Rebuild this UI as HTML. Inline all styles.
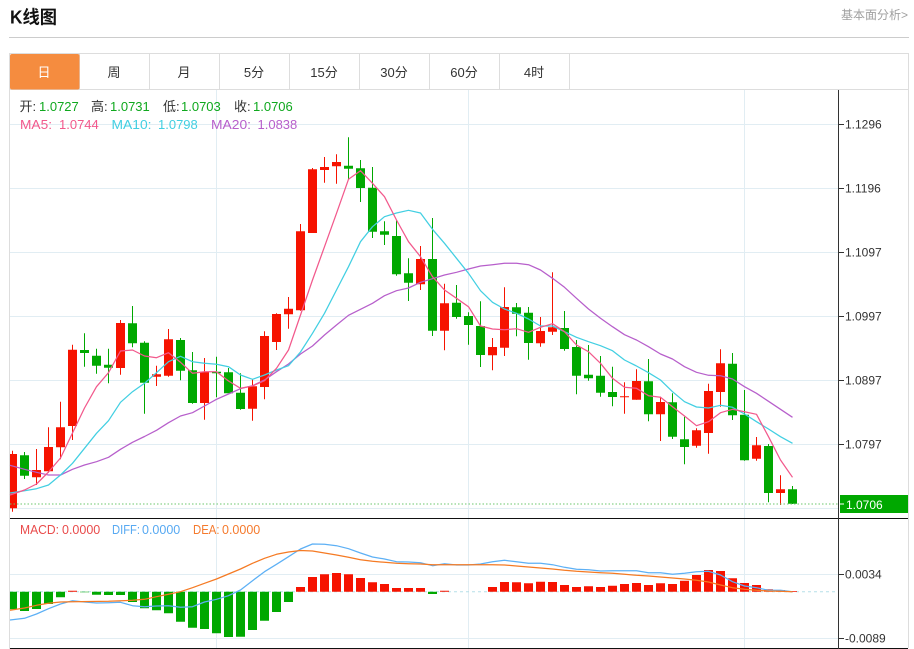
<!DOCTYPE html>
<html lang="zh">
<head>
<meta charset="utf-8">
<title>K线图</title>
<style>
html,body{margin:0;padding:0;background:#fff;width:914px;height:649px;overflow:hidden}
svg{display:block;position:absolute;left:0;top:0;font-family:"Liberation Sans","Noto Sans CJK SC",sans-serif}
text{white-space:pre}
</style>
</head>
<body>
<svg width="914" height="649" viewBox="0 0 914 649" xmlns="http://www.w3.org/2000/svg">
<rect width="914" height="649" fill="#fff"/>
<text x="10" y="23.5" font-size="18" font-weight="700" fill="#111" textLength="47" lengthAdjust="spacingAndGlyphs">K线图</text>
<text x="841" y="19" font-size="12" fill="#a0a0a0">基本面分析&gt;</text>
<path d="M9 37.5H909" stroke="#ccc" fill="none"/>

<!-- frame -->
<path d="M9.5 53.5H908.5V648M9.5 53V649M10 89.5H908.5M149.5 54V89M219.5 54V89M289.5 54V89M359.5 54V89M429.5 54V89M499.5 54V89M569.5 54V89M79.5 54V89" stroke="#ddd" fill="none"/>
<rect x="10" y="54" width="69.5" height="35.5" rx="2" fill="#f58c3f"/>
<g font-size="13" text-anchor="middle" fill="#333">
<text x="44" y="77" fill="#fff">日</text>
<text x="114" y="77">周</text>
<text x="184" y="77">月</text>
<text x="254" y="77">5分</text>
<text x="324" y="77">15分</text>
<text x="394" y="77">30分</text>
<text x="464" y="77">60分</text>
<text x="534" y="77">4时</text>
</g>

<!-- grid -->
<path d="M10 124.5H838M10 188.5H838M10 252.5H838M10 316.5H838M10 380.5H838M10 444.5H838M10 508.5H838M10 574.5H838M10 638.5H838M216.5 90V648M468.5 90V648M744.5 90V648" stroke="#e1edf3" fill="none"/>

<!-- candles -->
<path stroke="#f61300" fill="none" d="M12.5 450.7V511.7M36.5 449V485M48.5 427.3V472.7M60.5 401.7V459.3M72.5 344.7V440M120.5 320V374.7M156.5 365.7V386M168.5 329V376.7M204.5 358V419.7M252.5 379.3V420.7M264.5 331.3V399.3M276.5 313.3V350M288.5 297V328.7M300.5 224V310.7M312.5 168V233M324.5 157V182.7M336.5 154.3V183.7M420.5 246V290M444.5 283.7V350.3M492.5 338V370.3M504.5 287.3V356M540.5 317V346.7M552.5 272.3V335M624.5 382.3V413.7M636.5 369.3V399.7M660.5 396.7V441M696.5 428.3V447.7M708.5 383.7V453.7M720.5 349.3V406.7M756.5 437V460.7M780.5 475.3V505"/>
<path fill="#f61300" d="M10 454H17V508.3H10zM32 470h9V477.3H32zM44 447h9V471.3H44zM56 427.3h9V447.3H56zM68 349.7h9V426H68zM116 323h9V368H116zM152 374.3h9V376.7H152zM164 339.3h9V375.7H164zM200 371.7h9V403H200zM248 386.3h9V408.7H248zM260 336h9V387H260zM272 314h9V342H272zM284 308.7h9V314.3H284zM296 231.3h9V310.3H296zM308 169.3h9V233H308zM320 167h9V170H320zM332 162h9V166.3H332zM416 259h9V284.3H416zM440 303.3h9V330.7H440zM488 347h9V355.3H488zM500 307h9V347.7H500zM536 331h9V343.3H536zM548 327.3h9V331.7H548zM620 396.3h9V397.3H620zM632 381h9V399.7H632zM656 402h9V414.3H656zM692 430.3h9V445.7H692zM704 391h9V433H704zM716 363.3h9V392H716zM752 445.3h9V458.7H752zM776 489.3h9V493H776z"/>
<path stroke="#00a800" fill="none" d="M24.5 452V479M84.5 333.3V366.7M96.5 348.7V373.7M108.5 348.7V383.3M132.5 306V347.3M144.5 341.3V413.7M180.5 338V380.3M192.5 352V403.7M216.5 356.7V397.3M228.5 368V393M240.5 373.3V409.7M348.5 137.3V180M360.5 160V202M372.5 167V238M384.5 221.3V245M396.5 220V275.7M408.5 258.3V301M432.5 218V336M456.5 285V318.7M468.5 312.3V344.7M480.5 301.3V367M516.5 303V336.3M528.5 307V359.7M564.5 311V350.7M576.5 340V394.3M588.5 345V380.7M600.5 356V396.7M612.5 366.7V406.3M648.5 359V421.3M672.5 393.3V439M684.5 416.7V464.3M732.5 353V420M744.5 390V460.7M768.5 444V502.3M792.5 486V504"/>
<path fill="#00a800" d="M20 455.3h9V475.7H20zM80 350h9V353H80zM92 355.7h9V365.7H92zM104 364.7h9V367.7H104zM128 323.3h9V343.3H128zM140 342.7h9V382.7H140zM176 340h9V370.7H176zM188 370.3h9V403H188zM212 371.7h9V373.3H212zM224 372.3h9V393.3H224zM236 392.7h9V409H236zM344 165.7h9V168.7H344zM356 168.3h9V188H356zM368 187.7h9V231.7H368zM380 231.3h9V234.7H380zM392 236h9V274.3H392zM404 273.3h9V282.7H404zM428 259h9V330.7H428zM452 302.7h9V317H452zM464 316h9V325H464zM476 326h9V355H476zM512 307.3h9V313.7H512zM524 312.7h9V343H524zM560 328h9V349H560zM572 347h9V375.7H572zM584 374.7h9V378.3H584zM596 375.7h9V392.7H596zM608 392h9V397H608zM644 381.3h9V414.3H644zM668 402.3h9V436.7H668zM680 439.3h9V447H680zM728 363.7h9V415.3H728zM740 414.7h9V460.3H740zM764 446h9V493H764zM788 489.3h9V503.7H788z"/>

<!-- moving averages -->
<g fill="none" stroke-width="1.25" stroke-linejoin="round">
<polyline stroke="#b75fcb" points="10,465.3 24.5,469.3 36.5,472.3 48.5,475 60.5,475 72.5,469.3 84.5,465 96.5,461.7 108.5,457.3 120.5,449.3 132.5,442.3 144.5,436.5 156.5,430.3 168.5,422.7 180.5,416 192.5,412.7 204.5,406 216.5,399.3 228.5,394 240.5,388.7 252.5,385.7 264.5,380 276.5,371.7 288.5,364 300.5,354 312.5,346 324.5,335 336.5,325 348.5,315.3 360.5,309.3 372.5,303.3 384.5,295.7 396.5,290.7 408.5,288 420.5,282.3 432.5,278.7 444.5,275 456.5,272.3 468.5,269 480.5,266 492.5,264.7 504.5,263.3 516.5,263.3 528.5,264.7 540.5,270 552.5,278.3 564.5,287.3 576.5,298.3 588.5,309 600.5,318.3 612.5,326.7 624.5,334.7 636.5,340 648.5,346.7 660.5,354 672.5,359 684.5,366.7 696.5,372.3 708.5,375.3 720.5,375.7 732.5,379 744.5,386.7 756.5,393.3 768.5,401.3 780.5,409.3 792.5,417.3"/>
<polyline stroke="#42cfe2" points="10,493 24.5,490.7 36.5,488.7 48.5,485 60.5,475 72.5,463.3 84.5,448.3 96.5,433.3 108.5,420.7 120.5,402.3 132.5,391.7 144.5,383.3 156.5,372.7 168.5,361.7 180.5,356.3 192.5,361.7 204.5,363.3 216.5,364.3 228.5,366.7 240.5,375 252.5,379.3 264.5,375 276.5,370 288.5,365.7 300.5,352 312.5,333.3 324.5,313.3 336.5,290 348.5,266.7 360.5,241.7 372.5,226.7 384.5,216.7 396.5,213 408.5,210.3 420.5,213 432.5,229.3 444.5,243.3 456.5,258.3 468.5,273.3 480.5,290.7 492.5,302.3 504.5,309 516.5,313.3 528.5,319 540.5,326 552.5,326 564.5,331.7 576.5,337.3 588.5,341.7 600.5,345.7 612.5,350.7 624.5,360 636.5,366 648.5,372.7 660.5,380 672.5,391.7 684.5,401.7 696.5,407 708.5,408 720.5,405.3 732.5,407.3 744.5,414 756.5,421.7 768.5,429 780.5,436.7 792.5,443.3"/>
<polyline stroke="#f2598c" points="10,495 24.5,490 36.5,484 48.5,472 60.5,458 72.5,433 84.5,408 96.5,386.7 108.5,372.7 120.5,351 132.5,350 144.5,356 156.5,357.7 168.5,352.7 180.5,362.3 192.5,373.3 204.5,371.7 216.5,371.7 228.5,381 240.5,388.3 252.5,386 264.5,380.7 276.5,368.3 288.5,350 300.5,315 312.5,280 324.5,246.7 336.5,213.3 348.5,179.3 360.5,170.7 372.5,183.3 384.5,196.7 396.5,220 408.5,241.7 420.5,256.7 432.5,276.7 444.5,290 456.5,298.3 468.5,306.7 480.5,326 492.5,329 504.5,329.7 516.5,328.7 528.5,332.3 540.5,327.3 552.5,323.7 564.5,331.7 576.5,345 588.5,351.7 600.5,363.3 612.5,378.3 624.5,387.3 636.5,388.3 648.5,395.7 660.5,397.3 672.5,406.7 684.5,416 696.5,425.7 708.5,421.7 720.5,412.7 732.5,409.3 744.5,411.7 756.5,414.3 768.5,436.7 780.5,460 792.5,477.3"/>
</g>

<!-- last price dotted -->
<path d="M10 504H838" stroke="#6cc76c" stroke-width="1" stroke-dasharray="1.5 2" fill="none"/>

<!-- macd bars -->
<path d="M10 591.7H838" stroke="#b5dfe8" stroke-dasharray="3 3" fill="none"/>
<path fill="#00a800" d="M10 591.7H17V609.3H10zM20 591.7h9V611H20zM32 591.7h9V609H32zM44 591.7h9V604H44zM56 591.7h9V597.3H56zM80 591.7h9V592.3H80zM92 591.7h9V594.7H92zM104 591.7h9V595H104zM116 591.7h9V595H116zM128 591.7h9V602H128zM140 591.7h9V608.3H140zM152 591.7h9V610.3H152zM164 591.7h9V613.3H164zM176 591.7h9V621.7H176zM188 591.7h9V627.7H188zM200 591.7h9V629H200zM212 591.7h9V633.3H212zM224 591.7h9V637H224zM236 591.7h9V636.7H236zM248 591.7h9V630H248zM260 591.7h9V620.7H260zM272 591.7h9V612H272zM284 591.7h9V602H284zM428 591.7h9V594H428z"/>
<path fill="#f61300" d="M68 590.7h9V591.7H68zM296 587h9V591.7H296zM308 577h9V591.7H308zM320 574.3h9V591.7H320zM332 573h9V591.7H332zM344 574.3h9V591.7H344zM356 578h9V591.7H356zM368 582.3h9V591.7H368zM380 584h9V591.7H380zM392 588h9V591.7H392zM404 588h9V591.7H404zM416 588h9V591.7H416zM440 590.7h9V591.7H440zM488 587h9V591.7H488zM500 582h9V591.7H500zM512 582.3h9V591.7H512zM524 583.3h9V591.7H524zM536 581.7h9V591.7H536zM548 582h9V591.7H548zM560 585h9V591.7H560zM572 587h9V591.7H572zM584 586.3h9V591.7H584zM596 587h9V591.7H596zM608 585.7h9V591.7H608zM620 584h9V591.7H620zM632 583h9V591.7H632zM644 585h9V591.7H644zM656 583.3h9V591.7H656zM668 584h9V591.7H668zM680 580.7h9V591.7H680zM692 575h9V591.7H692zM704 570h9V591.7H704zM716 571h9V591.7H716zM728 578.3h9V591.7H728zM740 583h9V591.7H740zM752 585h9V591.7H752zM764 589.3h9V591.7H764zM776 590h9V591.7H776zM788 591h9V591.7H788z"/>
<g fill="none" stroke-width="1.25" stroke-linejoin="round">
<polyline stroke="#5db0f5" points="10,620 24.5,618.3 36.5,614 48.5,608.7 60.5,604 72.5,600.7 84.5,602 96.5,603 108.5,602.7 120.5,602.3 132.5,605.7 144.5,606.7 156.5,606 168.5,605.7 180.5,607.3 192.5,606.7 204.5,602 216.5,599.3 228.5,595.7 240.5,590 252.5,580.7 264.5,571.7 276.5,564.3 288.5,556.7 300.5,549 312.5,544 324.5,544.3 336.5,545.7 348.5,548.7 360.5,553 372.5,557 384.5,559 396.5,561.7 408.5,562 420.5,562.7 432.5,565.7 444.5,563.7 456.5,565 468.5,565 480.5,564 492.5,561.7 504.5,560.3 516.5,561.7 528.5,563.3 540.5,563.3 552.5,564.7 564.5,567.3 576.5,569.3 588.5,569.7 600.5,571 612.5,570.7 624.5,570.7 636.5,570.7 648.5,572.7 660.5,572.7 672.5,574.3 684.5,573.3 696.5,571.7 708.5,571.3 720.5,575 732.5,581.7 744.5,586 756.5,587.7 768.5,590.3 780.5,590.3 792.5,591.7"/>
<polyline stroke="#f57a23" points="10,610.3 24.5,608 36.5,605.3 48.5,603.3 60.5,602 72.5,601.7 108.5,601.3 132.5,600.3 144.5,599.3 156.5,596.7 168.5,594.3 180.5,591.7 192.5,587.7 204.5,583.3 216.5,579 228.5,574 240.5,569 252.5,563.3 264.5,558.3 276.5,554.3 288.5,552 300.5,550.5 312.5,551 324.5,553 336.5,555 348.5,557.3 360.5,559.7 372.5,561.3 384.5,562.3 396.5,563.3 408.5,563.7 420.5,564 432.5,564.7 492.5,564.7 504.5,565 516.5,566 528.5,567 540.5,568 552.5,569 564.5,570.3 576.5,571.3 588.5,572 600.5,572.7 612.5,573.3 624.5,574.3 636.5,575.3 648.5,576 660.5,577 672.5,578 684.5,579 696.5,580.3 708.5,582 720.5,585 732.5,587.7 744.5,589.3 756.5,590.3 768.5,591 780.5,591.3 792.5,591.7"/>
</g>

<!-- separators and axis -->
<path d="M10 518.5H908M10 648.5H908" stroke="#111" fill="none"/>
<path d="M838.5 90V649" stroke="#333" fill="none"/>
<path d="M839 124.5H844M839 188.5H844M839 252.5H844M839 316.5H844M839 380.5H844M839 444.5H844M839 574.5H844M839 638.5H844" stroke="#333" fill="none"/>
<g font-size="12" fill="#333">
<text x="845" y="128.5">1.1296</text>
<text x="845" y="192.5">1.1196</text>
<text x="845" y="256.5">1.1097</text>
<text x="845" y="320.5">1.0997</text>
<text x="845" y="384.5">1.0897</text>
<text x="845" y="448.5">1.0797</text>
<text x="845" y="578.5">0.0034</text>
<text x="845" y="642.5">-0.0089</text>
</g>
<rect x="840" y="495" width="68" height="18" fill="#00a800"/>
<path d="M840 504H844" stroke="#fff" fill="none"/>
<text x="846" y="509" font-size="12" fill="#fff">1.0706</text>

<!-- legend -->
<g font-size="13">
<text x="19.5" y="111" fill="#333">开:</text><text x="39" y="111" fill="#0fa81e">1.0727</text>
<text x="91" y="111" fill="#333">高:</text><text x="110" y="111" fill="#0fa81e">1.0731</text>
<text x="163" y="111" fill="#333">低:</text><text x="181" y="111" fill="#0fa81e">1.0703</text>
<text x="234" y="111" fill="#333">收:</text><text x="253" y="111" fill="#0fa81e">1.0706</text>
<text x="20" y="129" fill="#f2598c" textLength="32" lengthAdjust="spacingAndGlyphs">MA5:</text><text x="59" y="129" fill="#f2598c">1.0744</text>
<text x="111.5" y="129" fill="#42cfe2" textLength="40" lengthAdjust="spacingAndGlyphs">MA10:</text><text x="158" y="129" fill="#42cfe2">1.0798</text>
<text x="211" y="129" fill="#b75fcb" textLength="40" lengthAdjust="spacingAndGlyphs">MA20:</text><text x="257.5" y="129" fill="#b75fcb">1.0838</text>
</g>
<g font-size="12.5">
<text x="20" y="534" fill="#e94b4b" textLength="39" lengthAdjust="spacingAndGlyphs">MACD:</text><text x="62" y="534" fill="#e94b4b">0.0000</text>
<text x="112" y="534" fill="#57a9f2" textLength="28" lengthAdjust="spacingAndGlyphs">DIFF:</text><text x="142" y="534" fill="#57a9f2">0.0000</text>
<text x="193" y="534" fill="#f57a2d" textLength="26.5" lengthAdjust="spacingAndGlyphs">DEA:</text><text x="222" y="534" fill="#f57a2d">0.0000</text>
</g>
</svg>
</body>
</html>
